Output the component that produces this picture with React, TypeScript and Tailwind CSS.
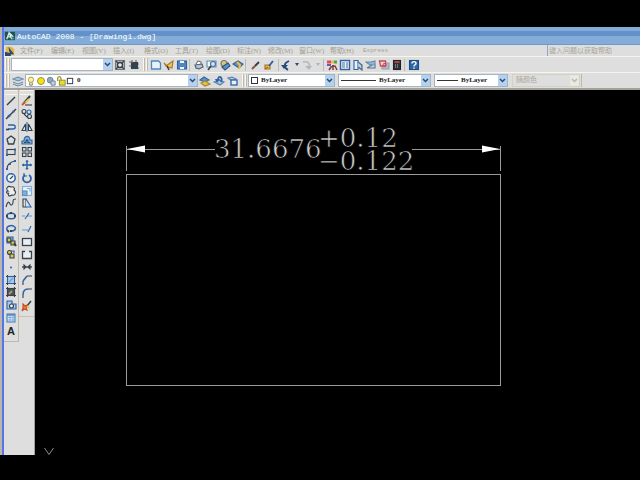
import type { ReactNode } from "react";

const B = "#2b62a8";
const L = "#7fb0dc";
const K = "#35414b";
const Y = "#e9c33c";

function Icon({ children, size = 12 }: { children: ReactNode; size?: number }) {
  return (
    <svg
      width={size}
      height={size}
      viewBox="0 0 12 12"
      fill="none"
      stroke={K}
      strokeWidth="1.1"
      className="shrink-0"
      aria-hidden="true"
    >
      {children}
    </svg>
  );
}

type Tool = { name: string; art: ReactNode };

const drawTools: Tool[] = [
  { name: "Line", art: <path d="M2 10L10 2" strokeWidth="1.4" /> },
  {
    name: "Construction line",
    art: (
      <>
        <path d="M1 11L11 1" strokeWidth="1.4" />
        <path d="M3 9L5 7M8 4l1-1" stroke={B} strokeWidth="2.4" />
      </>
    ),
  },
  {
    name: "Polyline",
    art: (
      <>
        <path d="M3 4H8c3 0 3 4 0 4H3" stroke={B} strokeWidth="1.3" />
        <path d="M1 8.500h3" strokeWidth="1.6" />
      </>
    ),
  },
  { name: "Polygon", art: <path d="M6 2L10 5L8.6 10H3.4L2 5Z" strokeWidth="1.3" /> },
  {
    name: "Rectangle",
    art: (
      <>
        <rect x="2" y="3.500" width="8" height="5" />
        <path d="M1 9h2M9 3.500h2" stroke={B} strokeWidth="2" />
      </>
    ),
  },
  {
    name: "Arc",
    art: (
      <>
        <path d="M2 10C2 5 5 3 10 2" />
        <path d="M1 10h2M4 5h2M9 2h2" stroke={B} strokeWidth="2" />
      </>
    ),
  },
  {
    name: "Circle",
    art: (
      <>
        <circle cx="6" cy="6" r="4.2" stroke={B} strokeWidth="1.5" fill="#eef5fb" />
        <path d="M5 7L8 4" />
      </>
    ),
  },
  {
    name: "Revision cloud",
    art: <path d="M3 6C0 4 3 0 6 2C9 1 10 4 9 5C12 7 10 11 7 10C4 12 2 10 4 8C1 9 1 6 3 6Z" fill="#eee" />,
  },
  { name: "Spline", art: <path d="M1 10C3 3 4 5 5 7S8 8 8 5S9 2 11 2" /> },
  {
    name: "Ellipse",
    art: (
      <>
        <ellipse cx="6" cy="6" rx="4.3" ry="2.8" stroke={B} strokeWidth="1.5" />
        <path d="M1 6h2M9 6h2M5 3h2" strokeWidth="1.8" />
      </>
    ),
  },
  {
    name: "Ellipse arc",
    art: (
      <>
        <path d="M2 7C0 2 10 1 10.500 5.500C10 8 7 8 6 8" stroke={B} strokeWidth="1.5" />
        <path d="M2 7l2 2M5 8h2" strokeWidth="1.8" />
      </>
    ),
  },
  {
    name: "Insert block",
    art: (
      <>
        <path d="M2 2h6v6H2z" fill={L} stroke={B} />
        <circle cx="4" cy="5" r="2" fill={Y} />
        <path d="M6 6h4v4H6z" fill={Y} />
        <path d="M9 8l2 3" strokeWidth="2" />
      </>
    ),
  },
  {
    name: "Make block",
    art: (
      <>
        <circle cx="4.500" cy="4.500" r="2" fill={Y} />
        <path d="M5 6h4v4H5z" fill={Y} />
        <path d="M6 3h3v2" stroke={B} />
      </>
    ),
  },
  { name: "Point", art: <circle cx="6" cy="6.500" r="1" fill={B} stroke="none" /> },
  {
    name: "Hatch",
    art: (
      <>
        <rect x="2.500" y="2.500" width="7" height="7" fill="#a9cbe8" stroke={B} />
        <path d="M4 8l4-4" stroke="#6f9fce" />
        <path d="M1 2.500h2M2.500 1v2M9 2.500h2M9.500 1v2M1 9.500h2M2.500 9v2M9 9.500h2M9.500 9v2" stroke={K} />
      </>
    ),
  },
  {
    name: "Gradient",
    art: (
      <>
        <rect x="2.500" y="2.500" width="7" height="7" fill="#4b5459" />
        <path d="M1 2.500h10M1 9.500h10M2.500 1v10M9.500 1v10" />
        <path d="M4 8l3-3" stroke="#a39b62" strokeWidth="2" />
      </>
    ),
  },
  {
    name: "Region",
    art: (
      <>
        <path d="M2 2h5v3h4v5H2z" fill="#a9c9e4" stroke={B} />
        <circle cx="6.500" cy="7" r="2" fill="#eee" />
      </>
    ),
  },
  {
    name: "Table",
    art: (
      <>
        <rect x="2" y="2" width="8" height="8" fill="#d8e8f5" stroke="#4c81bb" />
        <path d="M2 3h8" stroke="#4c81bb" strokeWidth="1.500" />
        <path d="M2 5.500h8M2 8h8M5 3v7M8 3v7" stroke="#6f9fce" strokeWidth="0.700" />
      </>
    ),
  },
];

const modifyTools: Tool[] = [
  {
    name: "Erase",
    art: (
      <>
        <path d="M3 8L9 1" strokeWidth="2" />
        <path d="M4 8L8 4" stroke={Y} strokeWidth="2" />
        <path d="M1 10l3-3" stroke="#d0523f" strokeWidth="2" />
        <path d="M4 10h7" />
      </>
    ),
  },
  {
    name: "Copy",
    art: (
      <>
        <circle cx="3" cy="3.500" r="2" />
        <circle cx="8" cy="4" r="2" stroke={B} />
        <circle cx="8.500" cy="8.500" r="2" />
        <path d="M3 6l3 3" />
      </>
    ),
  },
  {
    name: "Mirror",
    art: (
      <>
        <path d="M1 9.500h3.500V3zM11 9.500H7.500V3z" fill="#f3f3f3" />
        <path d="M6 1v10" stroke={B} />
      </>
    ),
  },
  {
    name: "Offset",
    art: (
      <>
        <path d="M1 10V7h2C3 1 9 1 9 6h2v4z" fill={L} stroke={B} />
        <path d="M3 8.500h2C5 5 7 5 7 8.500h2" />
      </>
    ),
  },
  {
    name: "Array",
    art: (
      <>
        <rect x="1.500" y="1.500" width="3.500" height="3.500" />
        <rect x="7" y="1.500" width="3.500" height="3.500" />
        <rect x="1.500" y="7" width="3.500" height="3.500" />
        <rect x="7" y="7" width="3.500" height="3.500" />
      </>
    ),
  },
  {
    name: "Move",
    art: <path d="M6 1v10M1 6h10M5 3l1-1 1 1M5 9l1 1 1-1M3 5L2 6l1 1M9 5l1 1-1 1" stroke={B} strokeWidth="1.500" />,
  },
  {
    name: "Rotate",
    art: (
      <>
        <path d="M4 3A4 4 0 1 0 8 3" stroke={B} strokeWidth="1.800" />
        <path d="M3 1v3h3" stroke={B} />
      </>
    ),
  },
  {
    name: "Scale",
    art: (
      <>
        <rect x="1.500" y="1.500" width="9" height="9" stroke={L} fill="#e8eff5" />
        <rect x="1.500" y="6" width="4.500" height="4.500" fill={L} stroke="#5e8fbe" />
        <path d="M6 3.500h3v3" stroke={L} />
      </>
    ),
  },
  {
    name: "Stretch",
    art: (
      <>
        <path d="M2 10V2h3v8z" />
        <path d="M5 2l5 8H5" stroke={B} fill="#cfe0ee" />
      </>
    ),
  },
  {
    name: "Trim",
    art: (
      <>
        <path d="M1 6h3M6 6h5" stroke={L} strokeWidth="1.500" />
        <path d="M4 9L8 3" stroke={B} />
      </>
    ),
  },
  {
    name: "Extend",
    art: (
      <>
        <path d="M1 7h6" stroke={L} strokeWidth="1.500" />
        <path d="M7 9L10 3" stroke={B} />
      </>
    ),
  },
  {
    name: "Break at point",
    art: <rect x="1.500" y="2.500" width="9" height="7" strokeWidth="1.300" fill="#e9eef2" />,
  },
  { name: "Break", art: <path d="M4 2.500H1.500v7h9v-7H8" strokeWidth="1.300" fill="#e9eef2" /> },
  {
    name: "Join",
    art: (
      <>
        <path d="M1 6h10" strokeWidth="1.300" />
        <path d="M3 4l2 2-2 2zM9 4L7 6l2 2z" fill={K} />
      </>
    ),
  },
  {
    name: "Chamfer",
    art: (
      <>
        <path d="M2 11V7M6 2h5" />
        <path d="M2 7l4-5" stroke={B} strokeWidth="1.500" />
      </>
    ),
  },
  {
    name: "Fillet",
    art: (
      <>
        <path d="M2 11V8M7 2h4" />
        <path d="M2 8C2 4 4 2 7 2" stroke={B} strokeWidth="1.500" />
      </>
    ),
  },
  {
    name: "Explode",
    art: (
      <>
        <path d="M6 6L10 1" strokeWidth="1.500" />
        <path d="M2 4l2 2 2-1-1 3 1 2-3-1-2 2 1-3z" fill="#e98a2c" stroke="#c8472c" />
        <path d="M6 6l2 2" stroke={Y} strokeWidth="2" />
      </>
    ),
  },
];

const workspaceTools: Tool[] = [
  {
    name: "Workspace settings",
    art: (
      <>
        <rect x="1.500" y="1.500" width="9" height="9" fill="#b6bcc0" stroke="#777" />
        <circle cx="6" cy="6" r="2.500" fill="#eee" strokeWidth="1.400" />
        <path d="M2 2l2 2M8 8l2 2M2 10l2-2M8 4l2-2" />
      </>
    ),
  },
  {
    name: "My workspace",
    art: (
      <>
        <rect x="3.500" y="3.500" width="6" height="6" fill={K} />
        <path d="M1 3h3M4 1v3M8 1v2M10 5h1M10 9h1M1 7h2" stroke="#666" />
      </>
    ),
  },
];

const fileTools: Tool[] = [
  { name: "New", art: <path d="M1.500 2h7l2 2v6h-9z" fill="#e7f1fa" stroke="#4f86bf" strokeWidth="1.300" /> },
  {
    name: "Open",
    art: (
      <>
        <path d="M1 4l2 3 7-5-1 7-4-1z" fill="#f2c44d" stroke="#a87727" />
        <path d="M4 7l2 4" stroke={K} strokeWidth="1.500" />
      </>
    ),
  },
  {
    name: "Save",
    art: (
      <>
        <rect x="1.500" y="2" width="9" height="8" fill="#4f86bf" stroke={B} />
        <path d="M4 3h4M4 9h4" stroke="#eef5fb" strokeWidth="2" />
      </>
    ),
  },
];

const printTools: Tool[] = [
  {
    name: "Plot",
    art: (
      <>
        <path d="M3 5l2-3 3 1v2" fill="#fff" stroke="#6c7a8c" />
        <path d="M2 6l7-1 1 3-4 2-3-1z" fill="#b7c3d2" stroke="#4c5c74" />
      </>
    ),
  },
  {
    name: "Plot preview",
    art: (
      <>
        <path d="M1 2h9v6H1z" fill="#eef5fb" stroke="#5b8dc0" />
        <circle cx="7" cy="5" r="2.500" fill="#cfe4f5" stroke="#4c6c94" />
        <path d="M5 7l-3 4" strokeWidth="1.600" />
      </>
    ),
  },
  {
    name: "Publish",
    art: (
      <>
        <circle cx="5" cy="4.500" r="3" fill="#e7c35a" stroke="#5d7d9f" />
        <path d="M3 8l6-4 2 3-5 4z" fill="#5b93cc" stroke="#2f507c" />
      </>
    ),
  },
  {
    name: "3D DWF",
    art: (
      <>
        <path d="M1 5l5-3 5 3-4 4z" fill="#5b93cc" stroke="#40628c" />
        <path d="M5 3l3 3-1 4" stroke={Y} strokeWidth="2" />
      </>
    ),
  },
];

const brushTools: Tool[] = [
  {
    name: "Match properties",
    art: (
      <>
        <path d="M2 10l3-3" stroke="#8a5a3a" strokeWidth="2" />
        <path d="M5 7l4-4" strokeWidth="2" />
      </>
    ),
  },
  {
    name: "Block editor",
    art: (
      <>
        <path d="M2 6h5v4H2z" fill={Y} stroke="#9b7420" />
        <path d="M6 7l4-5" stroke={B} strokeWidth="2" />
        <path d="M2 10l3-2" stroke="#c9523a" />
      </>
    ),
  },
];

const paletteTools: Tool[] = [
  {
    name: "Sheet set",
    art: (
      <>
        <path d="M1 3h4" stroke="#d8467d" strokeWidth="3" />
        <path d="M5 3h3" stroke={Y} strokeWidth="3" />
        <path d="M8 3h3" stroke="#51a354" strokeWidth="3" />
        <path d="M1 6h4" stroke="#6a55b8" strokeWidth="2" />
        <path d="M3 11l2-3 4-1 2 4M7 6v5" stroke="#873d35" strokeWidth="1.500" />
      </>
    ),
  },
  {
    name: "Properties",
    art: (
      <>
        <rect x="1.500" y="1.500" width="9" height="9" fill="#e8f1f9" stroke={B} strokeWidth="1.400" />
        <path d="M3 4h3M3 6h3M3 8h3M8 3v6" stroke="#5a7392" />
      </>
    ),
  },
  {
    name: "Design center",
    art: (
      <>
        <path d="M2 1.500h4v9H2z" fill="#e8f1f9" stroke={B} />
        <path d="M6 3l4 3v5L6 8" fill="#b6cadd" stroke="#43617f" />
      </>
    ),
  },
  {
    name: "Tool palettes",
    art: (
      <>
        <path d="M1 3h5l4-1v4H5z" fill="#8fb8de" stroke="#6b87a3" />
        <path d="M3 9h7V6M2 9l5-3" fill="#c3d4e2" stroke="#547493" />
      </>
    ),
  },
  {
    name: "Markup set",
    art: (
      <>
        <path d="M4 4h7v6H4z" fill="#a9bccd" stroke="#8fa0b2" />
        <path d="M1.500 2h6v5h-5z" fill="#f3d5d6" stroke="#cc4856" strokeWidth="1.300" />
        <circle cx="6.500" cy="6" r="1.500" stroke="#cc4856" />
      </>
    ),
  },
  {
    name: "Calculator",
    art: (
      <>
        <rect x="2.500" y="1.500" width="7" height="9" fill="#2f3438" stroke="#222" />
        <path d="M3.500 3h5" stroke="#b64a46" strokeWidth="1.800" />
        <path d="M4 6h4M4 8h4" stroke="#b8b8b8" strokeDasharray="1 1" />
      </>
    ),
  },
];

const layerTools: Tool[] = [
  {
    name: "Make layer current",
    art: (
      <>
        <path d="M1 5l4-3 5 3-4 2z" fill="#5b93cc" stroke="#3c6699" />
        <path d="M2 8l4-2 5 3-5 2z" fill={Y} stroke="#a28730" />
      </>
    ),
  },
  {
    name: "Layer previous",
    art: (
      <>
        <path d="M1 7l5-2 5 2-4 3z" fill="#a7c6e2" stroke="#5c83aa" />
        <path d="M8 7C10 2 6 0 5 4" stroke={B} strokeWidth="1.800" />
        <path d="M2 4h5L4 8z" fill={B} stroke="none" />
      </>
    ),
  },
  {
    name: "Layer states",
    art: (
      <>
        <path d="M1 3l4-1 4 2-4 2z" fill="#a7c6e2" stroke="#5c83aa" />
        <rect x="4" y="5" width="6" height="5" fill="#e8f1f9" stroke={B} strokeWidth="1.300" />
      </>
    ),
  },
];

const menus = [
  ["文件", "F"],
  ["编辑", "E"],
  ["视图", "V"],
  ["插入", "I"],
  ["格式", "O"],
  ["工具", "T"],
  ["绘图", "D"],
  ["标注", "N"],
  ["修改", "M"],
  ["窗口", "W"],
  ["帮助", "H"],
];

function Grip() {
  return (
    <div className="flex h-full w-[7px] shrink-0 justify-center gap-px py-px" aria-hidden="true">
      <span className="w-[2px] border-r border-[#bdb9ab] bg-[#faf6ea]" />
      <span className="w-[2px] border-r border-[#bdb9ab] bg-[#faf6ea]" />
    </div>
  );
}

function Separator() {
  return <span className="mx-px h-3 w-px shrink-0 bg-[#bcbcb4]" aria-hidden="true" />;
}

function ToolButton({ tool }: { tool: Tool }) {
  return (
    <button type="button" aria-label={tool.name} className="flex w-[13px] shrink-0 items-center justify-center">
      <Icon>{tool.art}</Icon>
    </button>
  );
}

function Group({ tools, className = "" }: { tools: Tool[]; className?: string }) {
  return (
    <div className={`flex shrink-0 items-center ${className}`}>
      {tools.map((t) => (
        <ToolButton key={t.name} tool={t} />
      ))}
    </div>
  );
}

function Combo({
  label,
  value,
  className,
  lead,
  disabled = false,
}: {
  label: string;
  value: string;
  className: string;
  lead?: ReactNode;
  disabled?: boolean;
}) {
  return (
    <label
      className={`flex h-[13px] shrink-0 items-center border ${
        disabled ? "border-[#d3d1c6] bg-[#dedede] text-[#aaa69b]" : "border-[#a5b4c4] bg-white text-[#222]"
      } ${className}`}
    >
      {lead}
      <select
        aria-label={label}
        disabled={disabled}
        className={`h-full min-w-0 flex-1 appearance-none bg-transparent pl-[3px] text-[7px] leading-[11px] opacity-100 outline-none ${
          disabled ? "" : "font-bold"
        }`}
      >
        <option>{value}</option>
      </select>
      <span
        className={`flex h-full w-[9px] shrink-0 items-center justify-center ${
          disabled ? "bg-[#e9e8e3]" : "bg-[#b4d2f0]"
        }`}
      >
        <svg width="7" height="5" viewBox="0 0 7 5" fill="none" aria-hidden="true">
          <path d="M1 1L3.500 3.500L6 1" stroke={disabled ? "#b9b8b0" : "#2c4a72"} strokeWidth="1.500" />
        </svg>
      </span>
    </label>
  );
}

function DrawingCanvas() {
  return (
    <svg
      width="470"
      height="365"
      viewBox="35 90 470 365"
      className="block"
      role="img"
      aria-label="Dimensioned rectangle"
    >
      <g fill="none" stroke="#9b9b97" shapeRendering="crispEdges">
        <rect x="126.500" y="174.500" width="374" height="211" />
        <path d="M126.500 146V171M500.500 146V171M127 149.500H215M412 149.500H500" />
      </g>
      <path d="M127 149L145 145.500V152.500ZM500 149L482 145.500V152.500Z" fill="#fff" />
      <g
        fill="#d0d0d0"
        stroke="#000"
        strokeWidth="0.7"
        opacity="0.99"
        fontFamily="'DejaVu Serif', serif"
        fontSize="26"
      >
        <text x="214" y="158">31.6676</text>
        <text x="318" y="147">+0.12</text>
        <text x="318" y="170">−0.122</text>
      </g>
      <path d="M44.500 448L49 454.500L53.500 448" fill="none" stroke="#8d8d8d" />
    </svg>
  );
}

export default function App() {
  return (
    <div className="flex h-screen w-full flex-col overflow-hidden bg-black pt-[27px] pb-[25px] font-['Liberation_Serif','Noto_Sans_CJK_SC',serif]">
      <div className="flex min-h-0 flex-1 border-l-2 border-[#b9b7ad]">
        <div className="flex min-w-0 flex-1 flex-col border-l-2 border-[#5675e6] bg-[#dedede]">
          <header className="flex h-[18px] shrink-0 items-center gap-[2px] border-b border-[#7397c6] bg-[linear-gradient(to_bottom,#83add8_0px,#83add8_4px,#6492c8_4px,#6492c8_9px,#83add8_9px)] pl-px">
            <Icon size={10}>
              <rect x="0" y="1" width="12" height="10" fill="#1c5550" stroke="none" />
              <path d="M2 10L5 2l3 8M6 3l4 4M3 7h5" stroke="#dceeea" strokeWidth="1.500" />
              <path d="M8 9h3" stroke="#53a678" strokeWidth="2" />
            </Icon>
            <h1 className="pt-[2px] font-['Liberation_Mono',monospace] text-[8px] leading-[12px] font-normal whitespace-pre text-white">
              AutoCAD 2008 - [Drawing1.dwg]
            </h1>
          </header>

          <nav className="flex h-[12px] shrink-0 items-center border-b border-[#f7f4ea] pl-px text-[7px] leading-[10px] text-[#a29e93]">
            <span className="mr-[5px] flex h-full items-center">
              <Icon size={10}>
                <path d="M1 1h7l3 3v7H1z" fill="#e8b53a" stroke="none" />
                <path d="M4 1l7 9H6z" fill="#1f4b90" stroke="none" />
                <path d="M0 7l7 2v3H0z" fill="#2a4774" stroke="none" />
              </Icon>
            </span>
            {menus.map(([name, key]) => (
              <button key={name} type="button" className="w-[31px] shrink-0 text-left whitespace-nowrap">
                {name}({key})
              </button>
            ))}
            <button type="button" className="ml-[2px] shrink-0 font-['Liberation_Mono',monospace] text-[6px]">
              Express
            </button>
            <input
              type="text"
              aria-label="帮助"
              placeholder="键入问题以获取帮助"
              className="ml-auto h-[11px] w-[93px] border-l border-[#8fa6c4] bg-transparent pl-px text-[7px] outline-none placeholder:text-[#aaa69b] placeholder:opacity-100"
            />
          </nav>

          <div className="flex h-[16px] shrink-0 items-center border-b border-[#f7f4ea]">
            <Grip />
            <Combo label="Workspace" value="" className="w-[102px]" />
            <Group tools={workspaceTools} className="gap-px" />
            <span className="w-[2px] shrink-0" />
            <Grip />
            <Group tools={fileTools} />
            <Separator />
            <Group tools={printTools} className="ml-px" />
            <Separator />
            <Group tools={brushTools} className="mx-[2px]" />
            <Separator />
            <div className="flex w-[42px] shrink-0 items-center">
              <button type="button" aria-label="Undo" className="flex items-center">
                <Icon>
                  <path d="M8 11C3 8 4 4 9 2" stroke="#27497c" strokeWidth="1.800" />
                  <path d="M1 6h7L4 10z" fill="#27497c" stroke="none" />
                </Icon>
              </button>
              <button type="button" aria-label="Undo list" className="flex w-[9px] justify-center">
                <svg width="4" height="3" aria-hidden="true">
                  <path d="M0 0h4L2 3z" fill="#27497c" />
                </svg>
              </button>
              <button type="button" aria-label="Redo" className="flex items-center">
                <Icon>
                  <path d="M2 3C8 2 9 5 8 8" stroke="#b3b8bf" strokeWidth="1.500" />
                  <path d="M4 7h7L8 11z" fill="#b3b8bf" stroke="none" />
                </Icon>
              </button>
              <button type="button" aria-label="Redo list" className="flex w-[9px] justify-center">
                <svg width="4" height="3" aria-hidden="true">
                  <path d="M0 0h4L2 3z" fill="#aeb0b2" />
                </svg>
              </button>
            </div>
            <Separator />
            <Group tools={paletteTools} />
            <Separator />
            <button type="button" aria-label="Help" className="ml-px flex w-[13px] items-center justify-center">
              <Icon>
                <rect x="1.500" y="1.500" width="9" height="9" fill="#2d67a6" stroke="#1f4c80" />
                <path d="M4 4.500C4 2 8 2 8 4.500C8 6 6 5.500 6 7.500M6 8.500v1.200" stroke="#fff" strokeWidth="1.400" />
              </Icon>
            </button>
          </div>

          <div className="flex h-[17px] shrink-0 items-center border-b-2 border-[#a3a197]">
            <Grip />
            <button type="button" aria-label="Layer manager" className="mr-px flex w-[13px] items-center justify-center">
              <Icon>
                <path d="M1 4l5-2 5 2-5 2z" fill="#a7c6e2" stroke="#6d8dad" />
                <path d="M1 7l5 2 5-2M1 9l5 2 5-2" stroke="#6d8dad" />
              </Icon>
            </button>
            <Combo
              label="Layer"
              value="0"
              className="w-[173px]"
              lead={
                <span className="flex items-center">
                  <Icon size={10}>
                    <circle cx="6" cy="4.500" r="3.200" fill="#fff39a" stroke="#a8983c" />
                    <path d="M4.500 8v3h3V8" stroke="#6d6d62" />
                  </Icon>
                  <Icon size={10}>
                    <circle cx="6" cy="6" r="4.200" fill="#f3e11e" stroke="#8f8c30" />
                  </Icon>
                  <Icon size={10}>
                    <circle cx="5" cy="5" r="3.500" fill="#92a9bd" stroke="#6c8398" />
                    <path d="M6 6h5v5H6z" fill="#c3d2df" stroke="#6c8398" />
                  </Icon>
                  <Icon size={10}>
                    <path d="M2 6V3c0-3 4-3 4 0v2" stroke="#9a9221" strokeWidth="1.500" />
                    <rect x="4" y="5" width="7" height="6" fill="#e8dc28" stroke="#8f8c30" />
                  </Icon>
                  <Icon size={8}>
                    <rect x="2" y="2" width="8" height="8" fill="#fff" strokeWidth="1.500" />
                  </Icon>
                </span>
              }
            />
            <Group tools={layerTools} className="gap-px" />
            <span className="w-[2px] shrink-0" />
            <Grip />
            <div className="flex shrink-0 items-center gap-[3px] border-r border-[#bdb9ab] pr-px">
              <Combo
                label="Color"
                value="ByLayer"
                className="w-[87px]"
                lead={<span className="ml-[2px] size-[7px] border border-[#333] bg-white" />}
              />
              <Combo
                label="Linetype"
                value="ByLayer"
                className="w-[93px]"
                lead={<span className="ml-[2px] h-px w-[35px] bg-[#333]" />}
              />
              <Combo
                label="Lineweight"
                value="ByLayer"
                className="w-[74px]"
                lead={<span className="ml-[2px] h-px w-[21px] bg-[#333]" />}
              />
              <Combo label="Plot style" value="随颜色" className="ml-px w-[68px]" disabled />
            </div>
          </div>

          <div className="flex min-h-0 flex-1">
            <aside className="flex shrink-0 items-start border-r border-[#a3a197]">
              <div className="w-[15px] border-r border-b border-[#bdb9ab] pb-1">
                <div className="mx-px h-[5px] border-y border-[#f7f4ea]" />
                <div className="grid h-[242px] auto-rows-fr">
                  {drawTools.map((t) => (
                    <button
                      key={t.name}
                      type="button"
                      aria-label={t.name}
                      className="flex min-h-0 items-center justify-center"
                    >
                      <Icon>{t.art}</Icon>
                    </button>
                  ))}
                  <button
                    type="button"
                    className="min-h-0 text-center font-['Liberation_Sans',sans-serif] text-[11px] leading-[14px] font-bold text-[#222]"
                  >
                    A
                  </button>
                </div>
              </div>
              <div className="w-[15px] border-b border-[#c9bfb3] pb-1">
                <div className="mx-px h-[5px] border-y border-[#f7f4ea]" />
                <div className="grid h-[217px] auto-rows-fr">
                  {modifyTools.map((t) => (
                    <button
                      key={t.name}
                      type="button"
                      aria-label={t.name}
                      className="flex min-h-0 items-center justify-center"
                    >
                      <Icon>{t.art}</Icon>
                    </button>
                  ))}
                </div>
              </div>
            </aside>
            <main className="min-w-0 flex-1 overflow-hidden bg-black">
              <DrawingCanvas />
            </main>
          </div>
        </div>
      </div>
    </div>
  );
}
